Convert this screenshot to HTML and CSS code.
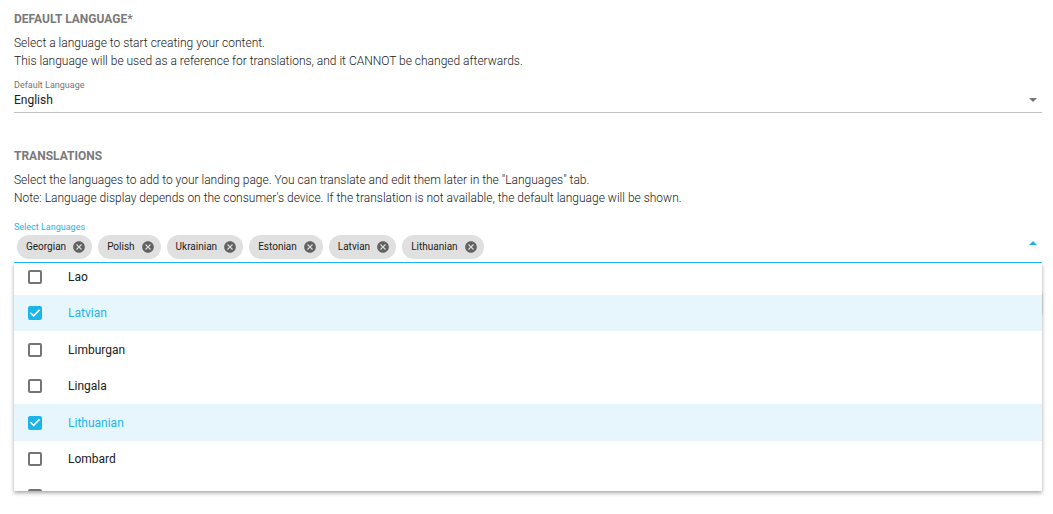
FILE: index.html
```html
<!DOCTYPE html>
<html lang="en">
<head>
  <meta charset="UTF-8">
  <meta name="viewport" content="width=device-width, initial-scale=1.0">
  <title>Languages</title>
  <link rel="stylesheet" href="styles.css">
</head>
<body>
  <svg class="sprite" aria-hidden="true">
    <symbol id="cancel" viewBox="0 0 24 24">
      <path d="M12 2C6.500 2 2 6.500 2 12s4.500 10 10 10 10-4.500 10-10S17.500 2 12 2zm5 13.600L15.600 17 12 13.400 8.400 17 7 15.600 10.600 12 7 8.400 8.400 7 12 10.600 15.600 7 17 8.400 13.400 12z"/>
    </symbol>
  </svg>

  <section class="section">
    <h2>DEFAULT LANGUAGE*</h2>
    <p>Select a language to start creating your content.<br>
    This language will be used as a reference for translations, and it CANNOT be changed afterwards.</p>
    <div class="field">
      <label class="field-label" for="default-language">Default Language</label>
      <select id="default-language">
        <option>English</option>
      </select>
      <span class="arrow"></span>
    </div>
  </section>

  <section class="section">
    <h2>TRANSLATIONS</h2>
    <p>Select the languages to add to your landing page. You can translate and edit them later in the "Languages" tab.<br>
    Note: Language display depends on the consumer's device. If the translation is not available, the default language will be shown.</p>
    <div class="field field-open">
      <span class="field-label" id="languages-label">Select Languages</span>
      <div class="chips">
        <span class="chip">Georgian <button type="button"><svg><use href="#cancel"/></svg></button></span>
        <span class="chip">Polish <button type="button"><svg><use href="#cancel"/></svg></button></span>
        <span class="chip">Ukrainian <button type="button"><svg><use href="#cancel"/></svg></button></span>
        <span class="chip">Estonian <button type="button"><svg><use href="#cancel"/></svg></button></span>
        <span class="chip">Latvian <button type="button"><svg><use href="#cancel"/></svg></button></span>
        <span class="chip">Lithuanian <button type="button"><svg><use href="#cancel"/></svg></button></span>
      </div>
      <span class="arrow arrow-up"></span>
      <div class="menu" role="group" aria-labelledby="languages-label">
        <div class="options">
          <label class="option"><input type="checkbox">Lao</label>
          <label class="option"><input type="checkbox" checked>Latvian</label>
          <label class="option"><input type="checkbox">Limburgan</label>
          <label class="option"><input type="checkbox">Lingala</label>
          <label class="option"><input type="checkbox" checked>Lithuanian</label>
          <label class="option"><input type="checkbox">Lombard</label>
          <label class="option"><input type="checkbox"></label>
        </div>
      </div>
    </div>
    <div class="actions"></div>
  </section>
</body>
</html>
```

FILE: styles.css
```css
* {
  box-sizing: border-box;
}
body {
  margin: 0;
  min-height: 100vh;
  padding: 10px 11px 0 14px;
  font-family: Roboto, sans-serif;
  font-size: 12px;
  line-height: 18px;
  color: #212121;
  background: #fff;
}
.sprite {
  display: none;
}
.section {
  margin-bottom: 34px;
}
h2 {
  margin: 0 0 6px;
  font-size: 12px;
  font-weight: 700;
  line-height: 18px;
  color: #7a7a7a;
}
p {
  margin: 0 0 10px;
  font-weight: 300;
}

/* fields */
.field {
  position: relative;
  display: flex;
  flex-direction: column;
  border-bottom: 1px solid #c2c2c2;
}
.field-label {
  font-size: 9px;
  line-height: 10px;
  color: #757575;
}
select {
  width: 100%;
  height: 22px;
  padding: 0 0 2px;
  border: none;
  appearance: none;
  background: none;
  font: inherit;
  color: #212121;
}
.arrow {
  position: absolute;
  right: 5px;
  bottom: 10px;
  border: 4px solid transparent;
  border-top-color: #757575;
  border-bottom: none;
}
.arrow-up {
  bottom: 17px;
  border-top: none;
  border-bottom: 4px solid #1cb5ea;
}
.field-open {
  margin-top: 15px;
  border-bottom-color: #1cb5ea;
}
.field-open .field-label {
  color: #1cb5ea;
}

/* chips */
.chips {
  display: flex;
  flex-wrap: wrap;
  gap: 6px;
  padding: 3px;
}
.chip {
  display: flex;
  align-items: center;
  gap: 6px;
  height: 24px;
  padding: 0 6px 0 9px;
  border-radius: 12px;
  background: #e0e0e0;
  font-size: 10px;
}
.chip button {
  width: 14px;
  height: 14px;
  padding: 0;
  border: none;
  background: none;
  color: #616161;
  cursor: pointer;
}
.chip svg {
  display: block;
  width: 14px;
  height: 14px;
  fill: currentColor;
}

/* dropdown */
.menu {
  position: absolute;
  top: 100%;
  left: 0;
  right: 0;
  height: 228px;
  margin-top: 1px;
  overflow: hidden;
  background: #fff;
  box-shadow: 0 2px 4px rgba(0, 0, 0, 0.35);
  clip-path: inset(0 -8px -8px);
}
.options {
  margin-top: -5px;
}
.option {
  display: flex;
  align-items: center;
  gap: 26px;
  height: 37px;
  padding: 0 14px;
  cursor: pointer;
}
.option:nth-child(even) {
  height: 36px;
}
.option:has(:checked) {
  background: #e7f6fd;
  color: #1cb5ea;
}
.option input {
  appearance: none;
  width: 14px;
  height: 14px;
  margin: 0;
  border: 2px solid #757575;
  border-radius: 2px;
}
.option input:checked {
  border: none;
  background: #1cb5ea;
}
.option input:checked::before {
  content: "";
  display: block;
  height: 14px;
  background: #fff;
  clip-path: polygon(14% 52%, 22% 44%, 40% 62%, 78% 24%, 86% 32%, 40% 78%);
}
.actions {
  width: 80px;
  height: 24px;
  margin: 28px 0 0 auto;
  border-radius: 2px;
  box-shadow: 0 1px 2px rgba(0, 0, 0, 0.4);
}
```
